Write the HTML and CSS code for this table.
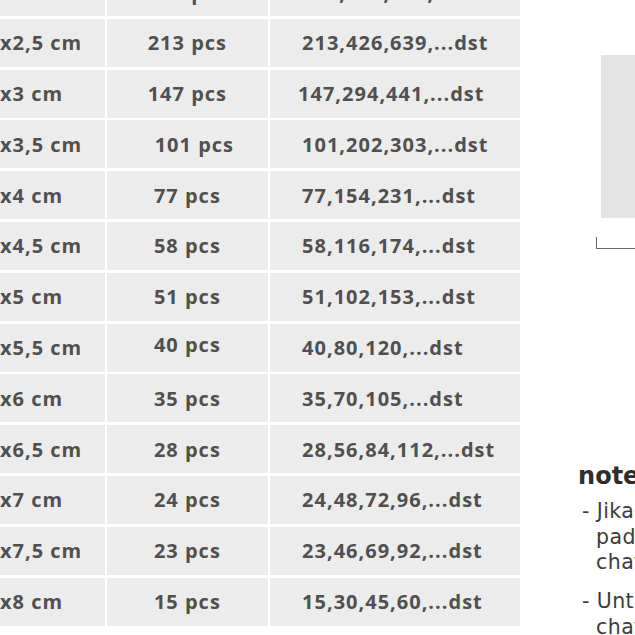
FILE: index.html
```html
<!DOCTYPE html>
<html lang="id">
<head>
<meta charset="utf-8">
<title>Tabel ukuran</title>
<link rel="stylesheet" href="styles.css">
</head>
<body>
<div class="page">
  <div class="table">
    <div class="cell size"><span class="pre">2</span>x2 cm</div><div class="cell">320 pcs</div><div class="cell list">320,640,960,...dst</div>
    <div class="cell size"><span class="pre">2,5</span>x2,5 cm</div><div class="cell">213 pcs</div><div class="cell list">213,426,639,...dst</div>
    <div class="cell size"><span class="pre">3</span>x3 cm</div><div class="cell">147 pcs</div><div class="cell list shift-l">147,294,441,...dst</div>
    <div class="cell size"><span class="pre">3,5</span>x3,5 cm</div><div class="cell shift-r">101 pcs</div><div class="cell list">101,202,303,...dst</div>
    <div class="cell size"><span class="pre">4</span>x4 cm</div><div class="cell">77 pcs</div><div class="cell list">77,154,231,...dst</div>
    <div class="cell size"><span class="pre">4,5</span>x4,5 cm</div><div class="cell">58 pcs</div><div class="cell list">58,116,174,...dst</div>
    <div class="cell size"><span class="pre">5</span>x5 cm</div><div class="cell">51 pcs</div><div class="cell list">51,102,153,...dst</div>
    <div class="cell size"><span class="pre">5,5</span>x5,5 cm</div><div class="cell up">40 pcs</div><div class="cell list">40,80,120,...dst</div>
    <div class="cell size"><span class="pre">6</span>x6 cm</div><div class="cell">35 pcs</div><div class="cell list">35,70,105,...dst</div>
    <div class="cell size"><span class="pre">6,5</span>x6,5 cm</div><div class="cell">28 pcs</div><div class="cell list">28,56,84,112,...dst</div>
    <div class="cell size"><span class="pre">7</span>x7 cm</div><div class="cell">24 pcs</div><div class="cell list">24,48,72,96,...dst</div>
    <div class="cell size"><span class="pre">7,5</span>x7,5 cm</div><div class="cell">23 pcs</div><div class="cell list">23,46,69,92,...dst</div>
    <div class="cell size"><span class="pre">8</span>x8 cm</div><div class="cell">15 pcs</div><div class="cell list">15,30,45,60,...dst</div>
  </div>
  <aside class="side">
    <div class="swatch"></div>
    <div class="corner"></div>
    <div class="notes">
      <h3 class="notes-title">note :</h3>
      <ul class="notes-list">
        <li>- Jika ukuran tidak tersedia<br>pada tabel, silakan tanyakan<br>chat admin terlebih dahulu</li>
        <li>- Untuk ukuran custom silakan<br>chat admin</li>
      </ul>
    </div>
  </aside>
</div>
</body>
</html>
```
FILE: styles.css
```css
html, body {
  margin: 0;
  padding: 0;
  background: #ffffff;
  overflow: hidden;
  width: 635px;
  height: 635px;
}

.page {
  display: flex;
  align-items: flex-start;
  margin-top: -32px;
  margin-left: -56px;
  width: 1200px;
}

.table {
  display: grid;
  grid-template-columns: 160.7px 160.6px 250px;
  grid-auto-rows: 48px;
  column-gap: 2.4px;
  row-gap: 2.8px;
  flex: none;
}

.cell {
  background: #ececec;
  color: #505050;
  font-family: "Open Sans", "Liberation Sans", sans-serif;
  font-weight: 700;
  font-size: 20px;
  letter-spacing: 1px;
  display: flex;
  align-items: center;
  justify-content: center;
  white-space: nowrap;
}

.cell.size {
  justify-content: flex-start;
}

.cell.list {
  justify-content: flex-start;
  padding-left: 32px;
}

.pre {
  display: inline-block;
  width: 56px;
  text-align: right;
}

.cell.list.shift-l { padding-left: 28px; }
.shift-r { padding-left: 14px; }
.up { padding-bottom: 6px; }

.side {
  margin-left: 58px;
  width: 600px;
  flex: none;
  display: flex;
  flex-direction: column;
}

.swatch {
  margin-top: 87px;
  margin-left: 23px;
  width: 120px;
  height: 163px;
  background: #e3e3e3;
}

.corner {
  margin-top: 19px;
  margin-left: 18px;
  width: 80px;
  height: 11px;
  border-left: 1.5px solid #6a6a6a;
  border-bottom: 1.5px solid #6a6a6a;
}

.notes {
  margin-top: 213px;
  font-family: "DejaVu Sans", "Liberation Sans", sans-serif;
  color: #3c3c3c;
}

.notes-title {
  margin: 0;
  font-size: 24px;
  line-height: 28px;
  font-weight: 700;
  color: #2e2e2e;
}

.notes-list {
  list-style: none;
  margin: 9px 0 0 4px;
  padding: 0 0 0 14px;
  font-size: 20.5px;
  letter-spacing: 0.4px;
  line-height: 25.5px;
}

.notes-list li {
  text-indent: -14px;
  margin-bottom: 13.5px;
}
```
